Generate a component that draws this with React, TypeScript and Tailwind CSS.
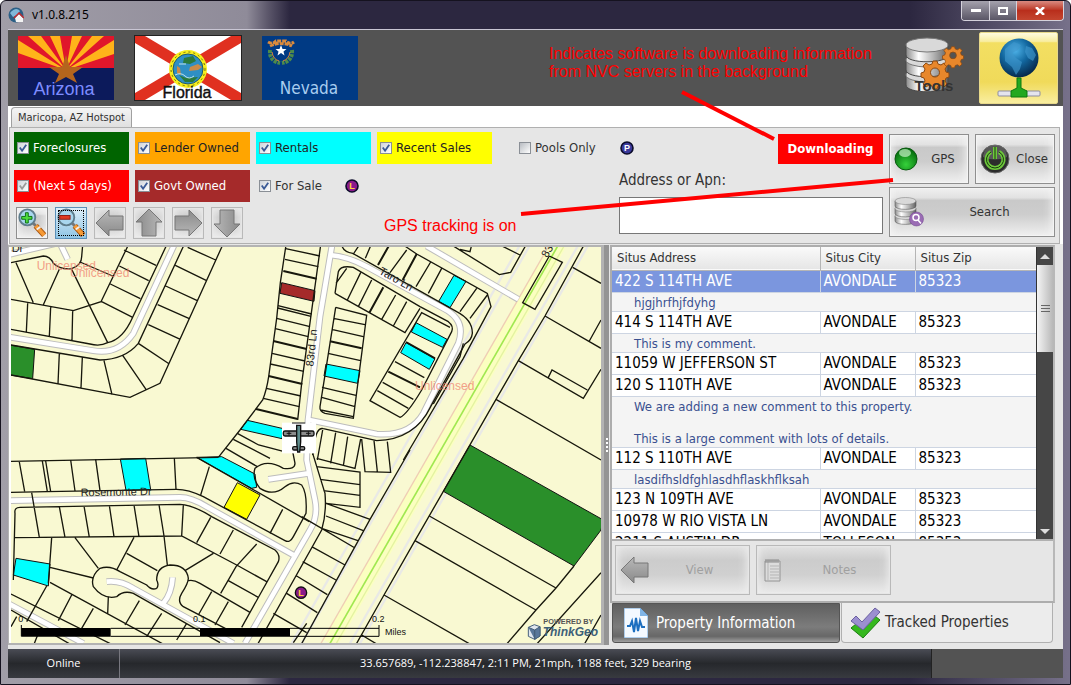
import React, { useState } from "react"

interface IFilter {
    id: string
    label: string
    className: string
    checked: boolean
    disabled?: boolean
    marker?: "L" | "P"
}

interface IProperty {
    address: string
    city: string
    zip: string
    comment?: string[]
}

const TAHOMA = "font-['DejaVu_Sans_Condensed','DejaVu_Sans',sans-serif]"
const ARIAL = "font-['Liberation_Sans',Arial,sans-serif]"

const glossy =
    "border border-[#8f8f8f] bg-[linear-gradient(180deg,#f0f0f0_0%,#e2e2e2_20%,#c9c9c9_26%,#cdcdcd_55%,#f0f0f0_100%)] shadow-[inset_0_0_0_1px_#f4f4f4,inset_-8px_0_10px_-6px_#f4f4f4,inset_8px_0_10px_-6px_#f4f4f4]"
const flat =
    "border border-[#b9b9b9] bg-[linear-gradient(180deg,#e2e2e2_0%,#cccccc_30%,#d0d0d0_60%,#ebebeb_100%)] shadow-[inset_0_0_0_1px_#e6e6e6,inset_-8px_0_10px_-6px_#eeeeee,inset_8px_0_10px_-6px_#eeeeee]"

const filters: IFilter[] = [
    { id: "foreclosures", label: "Foreclosures", className: "bg-[#006400] text-white", checked: true },
    { id: "lender", label: "Lender Owned", className: "bg-[#ffa500] text-[#222]", checked: true },
    { id: "rentals", label: "Rentals", className: "bg-[#00ffff] text-[#222]", checked: true },
    { id: "recent", label: "Recent Sales", className: "bg-[#ffff00] text-[#222]", checked: true },
    { id: "next", label: "(Next 5 days)", className: "bg-[#ff0000] text-white", checked: true, disabled: true },
    { id: "govt", label: "Govt Owned", className: "bg-[#a52a2a] text-white", checked: true },
    { id: "sale", label: "For Sale", className: "text-[#333]", checked: true, marker: "L" },
]

const properties: IProperty[] = [
    { address: "422 S 114TH AVE", city: "AVONDALE", zip: "85323", comment: ["hjgjhrfhjfdyhg"] },
    { address: "414 S 114TH AVE", city: "AVONDALE", zip: "85323", comment: ["This is my comment."] },
    { address: "11059 W JEFFERSON ST", city: "AVONDALE", zip: "85323" },
    {
        address: "120 S 110TH AVE",
        city: "AVONDALE",
        zip: "85323",
        comment: ["We are adding a new comment to this property.", "", "This is a large comment with lots of details."],
    },
    { address: "112 S 110TH AVE", city: "AVONDALE", zip: "85323", comment: ["lasdifhsldfghlasdhflaskhflksah"] },
    { address: "123 N 109TH AVE", city: "AVONDALE", zip: "85323" },
    { address: "10978 W RIO VISTA LN", city: "AVONDALE", zip: "85323" },
    { address: "2211 S AUSTIN DR", city: "TOLLESON", zip: "85353" },
]

function Marker({ letter }: { letter: "L" | "P" }) {
    const isL = letter === "L"
    return (
        <svg viewBox="0 0 14 14" className="w-[14px] h-[14px] shrink-0" aria-hidden="true">
            <circle cx="7" cy="7" r="6" fill={isL ? "#8b1a8b" : "#3a3a9c"} stroke="#0b0b2a" strokeWidth="1.6" />
            <text
                x="7"
                y="10"
                fontSize="9"
                fontWeight="bold"
                textAnchor="middle"
                fontFamily="Liberation Sans, sans-serif"
                fill={isL ? "#ffd23c" : "#ffffff"}
            >
                {letter}
            </text>
        </svg>
    )
}

function FilterBox({ filter }: { filter: IFilter }) {
    const [checked, setChecked] = useState(filter.checked)
    return (
        <div className={`flex items-center h-8 px-[3px] text-[13px] ${filter.className}`}>
            <span className="relative flex w-3 h-3 shrink-0">
                <input
                    id={filter.id}
                    type="checkbox"
                    checked={checked}
                    disabled={filter.disabled}
                    onChange={(e) => setChecked(e.target.checked)}
                    className="peer appearance-none w-3 h-3 border border-[#8a8f96] bg-[linear-gradient(135deg,#cfd4da,#ffffff)]"
                />
                <svg
                    viewBox="0 0 13 13"
                    className="absolute inset-0 hidden peer-checked:block pointer-events-none"
                    fill="none"
                    stroke={filter.disabled ? "#9a9a9a" : "#3a5a96"}
                    strokeWidth="2"
                >
                    <path d="M3 6l2.5 3.5L10 3" />
                </svg>
            </span>
            <label htmlFor={filter.id} className="pl-1 whitespace-nowrap">
                {filter.label}
            </label>
            {filter.marker && (
                <span className="ml-[23px]">
                    <Marker letter={filter.marker} />
                </span>
            )}
        </div>
    )
}

function ArizonaFlag() {
    return (
        <svg viewBox="0 0 96 64" className="w-24 h-16">
            <rect width="96" height="64" fill="#0c1a5b" />
            <rect width="96" height="32" fill="#e0162b" />
            <path
                d="M48 34L0 4v13zM48 34L10 0h13zM48 34L32 0h10zM48 34L54 0h10zM48 34L74 0h12zM48 34L96 4v14z"
                fill="#ffb31a"
            />
            <path d="M0 32h96v2H0z" fill="#0c1a5b" />
            <path d="M48 19l4 12h13l-10 7 4 9-11-6-11 6 4-9-10-7h13z" fill="#b5651d" />
            <text x="46" y="59" textAnchor="middle" fontSize="18" fontFamily="Liberation Sans, sans-serif" fill="#7d8cff">
                Arizona
            </text>
        </svg>
    )
}

function FloridaFlag() {
    return (
        <svg viewBox="0 0 108 66" className="w-[108px] h-[66px]">
            <rect x=".5" y=".5" width="107" height="65" fill="#fff" stroke="#222" />
            <path d="M1 1h10l96 57v7H97L1 8z M107 1H97L1 58v7h10l96-57z" fill="#e03020" />
            <circle cx="54" cy="34" r="19" fill="#f7ee1d" />
            <circle cx="54" cy="34" r="17" fill="none" stroke="#6b6a10" strokeWidth="1" strokeDasharray="2 3" />
            <circle cx="54" cy="34" r="15" fill="#2f8fc4" stroke="#205a66" />
            <path d="M50 23l9-2 3 5-6 3-7-1z M45 40l7 3 12-1-5 5h-8z" fill="#2b7a3c" />
            <path d="M56 32l8-3 4 3-4 3-9 1z M43 31l3 2 1 7-4-2z" fill="#c98b4a" />
            <path d="M41 40q6-3 10 1t9 0M45 29h7" stroke="#bfe4ee" fill="none" />
            <text x="53" y="63" textAnchor="middle" fontSize="16" fontFamily="Liberation Sans, sans-serif" fill="#111" stroke="#111" strokeWidth=".4">
                Florida
            </text>
        </svg>
    )
}

function NevadaFlag() {
    return (
        <svg viewBox="0 0 96 64" className="w-24 h-16">
            <rect width="96" height="64" fill="#003a84" />
            <path d="M6 6q5 3 8-1h10q4 4 8 1M8 10q11-5 22 0" stroke="#d98a3d" strokeWidth="3" fill="none" strokeDasharray="4 1" />
            <path d="M8 14q-1 11 10 13M30 14q1 11-10 13" stroke="#4d8b4a" strokeWidth="4" fill="none" strokeDasharray="3 1" />
            <path d="M10 16q1 7 7 9M28 16q-1 7-7 9" stroke="#d9803d" strokeWidth="1" fill="none" />
            <path d="M19 9l1.500 4h4l-3 2.500 1 4-3.500-2.500-3.500 2.500 1-4-3-2.500h4z" fill="#fff" />
            <text x="47" y="58" textAnchor="middle" fontSize="17" fontFamily="DejaVu Sans Condensed, DejaVu Sans, sans-serif" fill="#a9cdf0">
                Nevada
            </text>
        </svg>
    )
}

const GEAR = "M-2-11h4l1 3 3 1 3-2 3 3-2 3 1 3 3 1v4l-3 1-1 3 2 3-3 3-3-2-3 1-1 3h-4l-1-3-3-1-3 2-3-3 2-3-1-3-3-1v-4l3-1 1-3-2-3 3-3 3 2 3-1zM0-4a4.500 4.500 0 100 9 4.500 4.500 0 000-9z"

function Disks() {
    return (
        <>
            <defs>
                <linearGradient id="metal">
                    <stop offset="0" stopColor="#8a8a8a" />
                    <stop offset=".3" stopColor="#ffffff" />
                    <stop offset=".65" stopColor="#b5b5b5" />
                    <stop offset="1" stopColor="#626262" />
                </linearGradient>
            </defs>
            {[36, 21, 6].map((y) => (
                <g key={y}>
                    <path d={`M2 ${y + 4}v10c0 9 42 9 42 0v-10z`} fill="url(#metal)" stroke="#4a4a4a" />
                    <ellipse cx="23" cy={y + 4} rx="21" ry="7" fill="#d9d9d9" stroke="#777" />
                </g>
            ))}
        </>
    )
}

function ToolsIcon() {
    return (
        <svg viewBox="0 0 62 64" className="w-[62px] h-16">
            <Disks />
            <path d={GEAR} transform="translate(31 37)" fill="#e8872b" stroke="#8f4a10" fillRule="evenodd" />
            <path d={GEAR} transform="translate(49 20) scale(.75)" fill="#e8872b" stroke="#8f4a10" fillRule="evenodd" />
            <text x="30" y="56" textAnchor="middle" fontSize="15" fontFamily="Liberation Sans, sans-serif" fontWeight="bold" fill="#333">
                Tools
            </text>
        </svg>
    )
}

function GlobeIcon() {
    return (
        <svg viewBox="0 0 48 64" className="w-12 h-16">
            <defs>
                <radialGradient id="sea" cx=".4" cy=".3" r=".7">
                    <stop offset="0" stopColor="#4fb4ea" />
                    <stop offset=".5" stopColor="#12679f" />
                    <stop offset="1" stopColor="#062a4d" />
                </radialGradient>
            </defs>
            <circle cx="24" cy="22" r="19.500" fill="url(#sea)" />
            <path d="M10 13l9-7 7 3-3 5-6 3 4 5 6 4-2 7-4 6-4-8-7-6zM31 10l6 2 4 7-3 6-5-3-3-6z" fill="#3f96cc" opacity=".65" />
            <rect x="3" y="55" width="42" height="5" rx="1" fill="#e4e4ee" stroke="#8d8da0" />
            <path d="M22 42h4v10l6 3v6H16v-6l6-3z" fill="#23a820" stroke="#0d7a0e" />
        </svg>
    )
}

function Magnifier({ minus }: { minus?: boolean }) {
    return (
        <svg viewBox="0 0 32 32" className="w-[30px] h-[30px]">
            <path d="M17 16l4 4" stroke="#777" strokeWidth="3" />
            <path d="M20 19l9 10" stroke="#a85510" strokeWidth="6" />
            <path d="M20 19l9 10" stroke="#f59a36" strokeWidth="4" />
            <path d="M21 23l4-3" stroke="#eee" strokeWidth="2" />
            <circle cx="11" cy="10" r="8.500" fill="#a9d6ee" stroke="#5f7d8c" strokeWidth="2" />
            {minus ? (
                <rect x="4" y="8" width="11" height="4" fill="#e03a20" stroke="#8f1a10" />
            ) : (
                <path d="M9 5h3v4h4v3h-4v4H9v-4H5V9h4z" fill="#4ddc3d" stroke="#0b6b12" />
            )}
        </svg>
    )
}

function ArrowIcon({ className }: { className?: string }) {
    return (
        <svg viewBox="0 0 30 30" className={`w-[30px] h-[30px] ${className ?? ""}`}>
            <defs>
                <linearGradient id="arrow" x2="0" y2="1">
                    <stop offset="0" stopColor="#b8b8b8" />
                    <stop offset="1" stopColor="#8a8a8a" />
                </linearGradient>
            </defs>
            <path d="M1 15L14 2v6h14v14H14v6z" fill="url(#arrow)" stroke="#777" />
        </svg>
    )
}

/* Three map units per screen pixel. Each quadrant has its own origin. */
function ParcelMap() {
    return (
        <svg
            viewBox="33 21 1770 1188"
            preserveAspectRatio="xMinYMin slice"
            className="block w-full h-full bg-[#f9f9d2]"
            fontFamily="Liberation Sans, sans-serif"
            fontSize="33"
            role="img"
            aria-label="Parcel map"
        >
            {/* highway */}
            <g fill="none">
                <path d="M1675 15L990 1210" stroke="#fbffc0" strokeWidth="46" />
                <path d="M1560 15L875 1210M1590 15L905 1210M1735 15L1050 1210M1765 15L1080 1210" stroke="#e9e9e6" strokeWidth="7" />
                <path d="M1648 15L963 1210" stroke="#efcdb4" strokeWidth="4" />
                <path d="M1694 15L1009 1210" stroke="#e3f3a0" strokeWidth="4" />
                <path d="M1675 15L990 1210" stroke="#a0e850" strokeWidth="5" />
            </g>

            {/* streets: grey casing first, white fill over it */}
            {[
                { stroke: "#bdbdbd", width: 20 },
                { stroke: "#ffffff", width: 14 },
            ].map((s) => (
                <g key={s.width} fill="none" stroke={s.stroke} strokeWidth={s.width}>
                    <path d="M20 290L280 332Q355 345 400 280L525 10M20 45L170 10M180 10L203 58" />
                    <path d="M997 10L960 230L924 540L920 660L945 780Q955 830 930 870L735 1210" />
                    <path d="M990 45Q1045 50 1100 80L1330 205Q1400 240 1375 310L1270 520Q1230 590 1130 582L928 540" />
                    <path d="M1280 18L1555 178" />
                    <path d="M20 782L540 772Q575 772 620 800L880 945" />
                    <path d="M320 1025Q360 1020 400 1045L700 1210M518 1012Q515 1060 490 1090M805 718L925 700M20 1088L250 1210" />
                </g>
            ))}

            {/* flagged parcels */}
            <g stroke="#111" strokeWidth="3">
                <path d="M30 315L104 328L98 416L30 405z" fill="#2a8f2a" />
                <path d="M845 128L945 152L942 184L840 160z" fill="#a52a2a" />
                <g fill="#00ffff">
                    <path d="M742 541L850 566L846 596L722 568z" />
                    <path d="M1362 106L1398 124L1350 203L1316 184z" />
                    <path d="M1248 248L1341 298L1328 322L1234 276z" />
                    <path d="M1218 308L1305 356L1288 388L1202 338z" />
                    <path d="M978 372L1080 392L1073 430L972 408z" />
                    <path d="M361 657L437 655L452 749L378 751z" />
                    <path d="M590 652L665 650L765 702L770 742L755 745z" />
                    <path d="M48 955L150 972L145 1038L40 1005z" />
                </g>
                <path d="M712 728L780 765L740 838L672 802z" fill="#ffff00" />
                <path d="M1410 615L1810 840L1803 870L1722 978L1330 754z" fill="#2a8f2a" />
            </g>

            {/* parcel lines */}
            <g fill="none" stroke="#17170c" strokeWidth="4">
                <path d="M33 68L130 48Q150 48 160 70Q180 90 215 86Q245 75 245 50L248 15M48 68L100 188M33 178L220 212L303 185L385 15M178 88L130 194M215 88L323 308M240 66L338 108M372 30L468 76M358 78L446 122M331 132L421 176M305 185L398 232M500 15L398 232Q368 300 323 308Q300 320 270 312L33 268M83 190L79 276M152 200L148 290M218 212L216 300" />
                <path d="M552 15L415 310Q375 358 300 360L33 315M563 22L647 60M526 76L620 122M497 138L592 182M473 194L568 236M445 254L541 298M415 310L508 372M368 346L438 448M312 362L336 464M668 15L480 430L390 472L33 405M178 340L174 432M247 352L243 444" />
                <path d="M858 15L841 128L830 235L806 410Q800 450 788 480L720 570L655 652M962 15L905 430L893 540" />
                <path d="M857 26L960 48M855 58L955 80M834 197L935 222M833 204L933 229M830 235L930 260M826 266L925 290M816 340L915 363M811 372L912 394M799 445L903 468M790 475L898 500M712 580L776 615L850 634M700 598L810 655M678 625L772 680" />
                <path d="M850 93L950 116M820 303L920 327M806 408L907 432M768 507L893 537" strokeWidth="6" />
                <g transform="translate(900 0)">
                    <path d="M125 15Q130 36 158 40L470 215Q518 240 517 280Q515 300 495 312L392 500Q345 598 230 602L70 566Q48 560 42 620L38 645" />
                    <path d="M310 15L350 42L562 160L573 200L490 355L310 660M178 15L160 42M213 15L196 55M320 30L270 98M392 66L348 140M425 85L385 160M530 145L480 215M562 165L510 235M490 310L480 350L400 492" />
                    <path d="M268 15L234 75M350 42L308 120M250 142L208 218M318 306L405 355M265 395L360 442M90 304L185 325" strokeWidth="6" />
                    <path d="M105 160L115 95Q122 75 160 82L360 200L445 245Q462 258 455 275L365 450Q320 525 300 532L210 482L365 218L450 262M105 160L208 218L315 278L360 205M140 85L108 130M182 98L142 180M215 120L175 200M287 165L245 238M320 185L280 258M285 365L373 413M248 427L340 478M232 452L325 505" />
                    <path d="M107 202L60 500Q58 515 75 520L160 535L200 226L107 202M100 235L195 254M95 268L190 290M84 340L182 362M66 442L168 466M65 472L165 500M62 510L160 530" />
                    <path d="M68 570L52 660M107 578L92 670M143 590L130 678M182 597L165 685L50 655M185 597L195 695L272 697L262 605M222 602L232 695" />
                    <path d="M455 15L598 104L632 97L678 15M600 15L660 45M480 28L510 35L515 15M852 15L735 228L655 362L588 478L430 754L345 902L252 1065L170 1210" />
                    <path d="M818 82L903 130M748 48L787 67L705 208L668 188L748 48M735 228L903 325M903 240L868 303M655 362L850 475L903 388M745 412L756 390L862 450M588 478L903 660" />
                </g>
                <g transform="translate(0 630)">
                    <path d="M33 34L655 22M33 127L140 125L530 118Q565 118 610 140L855 272Q870 280 880 260L918 190Q922 130 905 105Q880 90 855 110Q820 140 780 115Q755 85 765 55Q800 25 850 55Q885 60 885 40L878 5" />
                    <path d="M58 36L74 125M127 33L142 125M137 33L152 125M212 30L225 123M287 28L300 122M523 24L528 118M628 50L602 135M590 22L928 215M848 178L810 250" />
                    <path d="M40 390L45 190Q42 172 60 172L540 163Q580 165 635 200L825 300Q842 315 835 335L725 532M45 263L545 258L710 345L800 395M95 128L118 262M178 170L195 262M252 168L268 262M328 166L342 260M402 165L417 260M477 164L492 258L502 345M550 165L545 258M632 202L590 278M700 240L660 312M770 282L708 350L662 430M685 392L775 442M640 310L555 362M225 263L295 355M402 262L350 360M380 310L472 362M155 263L145 400M150 352L280 384" />
                    <path d="M470 415Q455 422 440 405L360 365Q330 345 300 355Q270 380 280 410Q310 450 350 440Q370 420 400 430L660 578M470 415Q478 405 470 390Q470 350 510 345Q560 345 565 385Q565 400 545 430Q530 455 550 470L700 548M565 392Q580 388 600 400L750 487" />
                    <path d="M325 440L323 492M150 397L500 588M140 408L80 515M33 432L345 588M215 435L175 512M280 475L245 535M418 452L375 525M485 490L440 560M635 425L595 495M685 455L645 525M33 480L220 588M100 588L115 550M50 500L33 530M560 520L530 570" />
                </g>
                <g transform="translate(900 630)">
                    <path d="M38 10L75 130Q80 190 65 240L-130 588M330 0L210 208L165 290L0 590M50 50L180 66L180 172L78 160M60 88L180 104M70 122L180 136M78 160L210 208M78 198L190 242M65 235L174 272M5 200L165 294M35 290L135 345M8 335L108 390M-10 378L82 434M-40 430L52 488M-80 490L20 548M-20 578L20 520" />
                    <path d="M388 198L768 414M345 272L708 480M252 435L520 588M822 348L768 414L708 480L615 588M903 368L705 588M903 495L850 588M185 555L240 588" />
                </g>
            </g>

            <g fill="#222">
                <text x="35" y="36">Dr</text>
                <text transform="translate(940 380) rotate(-84)">83rd Ln</text>
                <text transform="translate(1135 100) rotate(29)">Taro Ln</text>
                <text transform="translate(1642 55) rotate(-60)">83</text>
                <text transform="translate(242 769) rotate(-1)">Rosemonte Dr</text>
            </g>
            <g fill="#f0836f" opacity=".75">
                <text x="110" y="90" fontSize="36">Unlicensed</text>
                <text x="210" y="111" fontSize="36">Unlicensed</text>
                <text x="1245" y="450" fontSize="36">Unlicensed</text>
            </g>

            {/* current position */}
            <g transform="translate(846 548)">
                <rect width="102" height="92" fill="#fff" />
                <g fill="#8c8c8c" stroke="#111" strokeWidth="4">
                    <rect x="4" y="25" width="92" height="15" rx="5" />
                    <rect x="32" y="72" width="36" height="10" rx="4" />
                    <path d="M44 8h12v50l-3 30h-6l-3-30z" fill="#5f8c8c" />
                </g>
                <path d="M30 1h40M14 32h14M21 26v13M72 32h14M79 26v13" stroke="#111" strokeWidth="3" />
            </g>

            <g transform="translate(903 1058)">
                <circle r="17" fill="#8b1a8b" stroke="#111" strokeWidth="4" />
                <text y="10" textAnchor="middle" fontSize="27" fontWeight="bold" fill="#ffd23c">
                    L
                </text>
            </g>

            {/* scale bar */}
            <g transform="translate(0 630)">
                <path d="M64 525v34M1137 525v34M332 535h268M332 559h268M870 535h267M870 559h267" stroke="#000" strokeWidth="3" />
                <path d="M64 534h268v26H64zM600 534h270v26H600z" />
                <g fontSize="27" fill="#111">
                    <text x="62" y="515" textAnchor="middle">0</text>
                    <text x="598" y="515" textAnchor="middle">0.1</text>
                    <text x="1135" y="515" textAnchor="middle">0.2</text>
                    <text x="1155" y="556">Miles</text>
                </g>
            </g>

            <g transform="translate(1580 1150)">
                <path d="M5 12l18-8 17 6v28l-16 10-19-9z" fill="#dfe6ee" stroke="#47617c" strokeWidth="3" />
                <path d="M5 12l19 8v28M24 20l16-10v28l-16 10z" fill="#58779a" stroke="#47617c" strokeWidth="3" />
                <text x="50" y="1" fontSize="22" fontWeight="bold" fill="#555">
                    POWERED BY
                </text>
                <text x="48" y="38" fontSize="36" fontWeight="bold" fontStyle="italic" fill="#3c6078">
                    ThinkGeo
                </text>
            </g>
        </svg>
    )
}

function PropertyTable() {
    return (
        <div className="flex flex-1 min-h-0 bg-white">
            <div className="flex-1 min-w-0 overflow-hidden">
                <table className="table-fixed w-full border-collapse text-left">
                    <colgroup>
                        <col />
                        <col className="w-[95px]" />
                        <col className="w-[121px]" />
                    </colgroup>
                    <thead>
                        <tr className="h-[23px] bg-linear-to-b from-[#fafafa] to-[#e6e6e6] border-b border-[#b5b5b5] text-[13px] leading-[22px] text-[#333]">
                            <th className="p-0 pl-[5px] font-normal border-r border-[#b5b5b5]">Situs Address</th>
                            <th className="p-0 pl-[5px] font-normal border-r border-[#b5b5b5]">Situs City</th>
                            <th className="p-0 pl-[5px] font-normal">Situs Zip</th>
                        </tr>
                    </thead>
                    <tbody>
                        {properties.map((p, i) => (
                            <React.Fragment key={p.address}>
                                <tr
                                    className={`h-[22px] text-[15px] leading-[21px] whitespace-nowrap border-b border-[#cdd5e2] ${
                                        i === 0 ? "bg-[#7b96de] text-white" : "bg-white text-black"
                                    }`}
                                >
                                    <td className="p-0 pl-[3px] border-r border-[#cdd5e2]">{p.address}</td>
                                    <td className="p-0 pl-[3px] border-r border-[#cdd5e2]">{p.city}</td>
                                    <td className="p-0 pl-[3px]">{p.zip}</td>
                                </tr>
                                {p.comment && (
                                    <tr className="bg-[#f4f4f4] border-b border-[#cdd5e2] text-[13px] text-[#3a5090]">
                                        <td colSpan={3} className="p-0 pl-[22px] pt-[2px]">
                                            {p.comment.map((line, j) => (
                                                <p key={j} className="h-4 leading-4">
                                                    {line}
                                                </p>
                                            ))}
                                        </td>
                                    </tr>
                                )}
                            </React.Fragment>
                        ))}
                    </tbody>
                </table>
            </div>
            <div className="flex flex-col w-[17px] bg-[#464646] border-l border-[#333]">
                <button aria-label="Scroll up" className="flex items-center justify-center h-[18px]">
                    <svg viewBox="0 0 10 5" className="w-[10px] h-[5px]">
                        <path d="M0 5l5-5 5 5z" fill="#ddd" />
                    </svg>
                </button>
                <div className="flex flex-col items-center justify-center gap-[2px] h-[87px] bg-linear-to-r from-[#f4f4f4] to-[#b8b8b8]">
                    <span className="w-[9px] h-px bg-[#666]" />
                    <span className="w-[9px] h-px bg-[#666]" />
                    <span className="w-[9px] h-px bg-[#666]" />
                </div>
                <button aria-label="Scroll down" className="flex items-center justify-center h-4 mt-auto">
                    <svg viewBox="0 0 10 5" className="w-[10px] h-[5px]">
                        <path d="M0 0l5 5 5-5z" fill="#ddd" />
                    </svg>
                </button>
            </div>
        </div>
    )
}

function TitleBar() {
    return (
        <div className="flex items-start justify-between h-7 pl-[7px] pr-[6px]">
            <div className="flex items-center gap-2 h-7">
                <svg viewBox="0 0 16 16" className="w-4 h-4">
                    <circle cx="8" cy="8" r="7.500" fill="#2b5f86" />
                    <path d="M2 6q6-7 10-2l-3 4-4 2z" fill="#7fb7d9" />
                    <path d="M7 11l4-4 4 4v4H8z" fill="#f4f4f4" />
                    <path d="M6 11l5-5 5 5" stroke="#c0282d" strokeWidth="1.500" fill="none" />
                </svg>
                <h1 className="text-[12px] text-black font-['Noto_Sans','Open_Sans',sans-serif]">v1.0.8.215</h1>
            </div>
            <div className="flex h-5 border border-t-0 border-[#d5d2dc] rounded-b-[4px] overflow-hidden">
                <button aria-label="Minimize" className="flex items-center justify-center w-[28px] border-r border-[#d5d2dc] bg-linear-to-b from-[#a5a2ad] to-[#5a5666]">
                    <span className="w-[10px] h-[3px] bg-white" />
                </button>
                <button aria-label="Maximize" className="flex items-center justify-center w-[27px] border-r border-[#d5d2dc] bg-linear-to-b from-[#a5a2ad] to-[#5a5666]">
                    <span className="w-[10px] h-2 border-2 border-white" />
                </button>
                <button aria-label="Close window" className="flex items-center justify-center w-[46px] bg-linear-to-b from-[#d98a80] via-[#b92e1c] to-[#c4452f]">
                    <svg viewBox="0 0 10 8" className="w-[10px] h-2" stroke="#fff" strokeWidth="2.500">
                        <path d="M1 0l8 8M9 0L1 8" />
                    </svg>
                </button>
            </div>
        </div>
    )
}

function Toolbar() {
    const [pools, setPools] = useState(false)
    const [address, setAddress] = useState("")
    return (
        <div className="flex h-[117px] ml-px mr-[3px] pl-1 pr-1 border border-[#b0b0b0] bg-[#e6e6e6]">
            <div className="pt-1">
                <div className="grid grid-cols-[repeat(4,115px)] gap-[6px]">
                    {filters.map((f) => (
                        <FilterBox key={f.id} filter={f} />
                    ))}
                </div>
                <div className="flex gap-[7px] pt-[5px] pl-[2px]">
                    <button aria-label="Zoom in" className={`w-8 h-8 ${glossy}`}>
                        <Magnifier />
                    </button>
                    <button aria-label="Zoom out" className="w-8 h-8 border border-[#5a8fb8] bg-linear-to-b from-[#dff0fa] to-[#8fc4e4] outline-1 outline-dotted outline-offset-[-4px] outline-black">
                        <Magnifier minus />
                    </button>
                    <button aria-label="Pan left" className={`w-8 h-8 ${flat}`}>
                        <ArrowIcon />
                    </button>
                    <button aria-label="Pan up" className={`w-8 h-8 ${flat}`}>
                        <ArrowIcon className="rotate-90" />
                    </button>
                    <button aria-label="Pan right" className={`w-8 h-8 ${flat}`}>
                        <ArrowIcon className="rotate-180" />
                    </button>
                    <button aria-label="Pan down" className={`w-8 h-8 ${flat}`}>
                        <ArrowIcon className="-rotate-90" />
                    </button>
                </div>
            </div>
            <div className="flex flex-col flex-1 pl-[27px] pr-[6px]">
                <div className="flex h-10 items-start">
                    <div className="flex items-center h-8 mt-1 text-[13px] text-[#333]">
                        <input
                            id="pools"
                            type="checkbox"
                            checked={pools}
                            onChange={(e) => setPools(e.target.checked)}
                            className="appearance-none w-3 h-3 border border-[#8a8f96] bg-[linear-gradient(135deg,#b8bcc2,#ffffff)] checked:bg-[#3a5a96]"
                        />
                        <label htmlFor="pools" className="w-[89px] pl-1 whitespace-nowrap">
                            Pools Only
                        </label>
                        <Marker letter="P" />
                    </div>
                    <p className="ml-auto mt-[6px] w-[105px] h-[30px] bg-[#ff0000] text-white text-center text-[13px] leading-[30px] font-bold">
                        Downloading
                    </p>
                </div>
                <div className="flex flex-col self-end w-[264px]">
                    <label htmlFor="address" className="pt-[2px] h-[29px] text-[15px] leading-5 text-[#333]">
                        Address or Apn:
                    </label>
                    <input
                        id="address"
                        value={address}
                        onChange={(e) => setAddress(e.target.value)}
                        className="w-full h-[37px] px-2 border border-[#777] bg-white outline-none"
                    />
                </div>
            </div>
            <div className="grid grid-cols-[80px_80px] gap-x-[6px] gap-y-[3px] w-[166px] shrink-0 content-start pt-[6px] text-[13px] text-[#333]">
                <button className={`flex items-center h-[50px] pl-1 ${glossy}`}>
                    <svg viewBox="0 0 24 24" className="w-6 h-6">
                        <defs>
                            <radialGradient id="led" cx=".5" cy=".75" r=".7">
                                <stop offset="0" stopColor="#35d13a" />
                                <stop offset="1" stopColor="#036a0c" />
                            </radialGradient>
                        </defs>
                        <circle cx="12" cy="12" r="11" fill="url(#led)" stroke="#0a5a10" />
                        <ellipse cx="11" cy="6" rx="6" ry="4" fill="#c7f2c6" opacity=".7" />
                    </svg>
                    <span className="flex-1">GPS</span>
                </button>
                <button className={`flex items-center h-[50px] pl-1 ${glossy}`}>
                    <svg viewBox="0 0 30 30" className="w-[30px] h-[30px] shrink-0">
                        <circle cx="15" cy="15" r="14" fill="#2c2c2c" stroke="#666" />
                        <path d="M3 13a12 12 0 0124 0q-12 5-24 0z" fill="#777" opacity=".6" />
                        <path d="M11 8a8.500 8.500 0 108 0M15 3v12" fill="none" stroke="#6ec83c" strokeWidth="4" />
                        <path d="M11 8a8.500 8.500 0 108 0M15 3v12" fill="none" stroke="#163a0c" strokeWidth="1" />
                    </svg>
                    <span className="flex-1">Close</span>
                </button>
                <button className={`flex items-center col-span-2 h-[50px] pl-1 ${glossy}`}>
                    <svg viewBox="0 0 62 64" className="w-[31px] h-8">
                        <Disks />
                        <circle cx="45" cy="46" r="14" fill="#9a6cb4" stroke="#6b3f88" />
                        <circle cx="44" cy="43" r="6" fill="none" stroke="#fff" strokeWidth="3" />
                        <path d="M48 48l6 7" stroke="#fff" strokeWidth="3" />
                    </svg>
                    <span className="flex-1">Search</span>
                </button>
            </div>
        </div>
    )
}

function SidePanel() {
    return (
        <div className="flex flex-col w-[454px] shrink-0 pl-px pr-2 pb-[2px] bg-[#e6e6e6]">
            <div className="flex flex-col flex-1 min-h-0 border-2 border-[#adadad] border-r-[#b8b8b8]">
                <PropertyTable />
                <div className="flex gap-[6px] h-[62px] pt-1 pl-[3px] border-t-2 border-[#b0b0b0] bg-[#e6e6e6] text-[13px] text-[#a0a0a0]">
                    <button disabled className={`flex items-center w-[135px] h-[50px] pl-1 ${flat}`}>
                        <ArrowIcon />
                        <span className="flex-1">View</span>
                    </button>
                    <button disabled className={`flex items-center w-[135px] h-[50px] pl-[7px] ${flat}`}>
                        <svg viewBox="0 0 17 24" className="w-[17px] h-6">
                            <path d="M1 3h15v20H1z" fill="#dcdcdc" stroke="#949494" />
                            <path d="M4 3v20M6 8h9M6 11h9M6 14h9M6 17h9M6 20h9" stroke="#b5b5b5" />
                            <path d="M2 1v4M4 1v4M6 1v4M8 1v4M10 1v4M12 1v4M14 1v4" stroke="#8a8a8a" />
                        </svg>
                        <span className="flex-1 pl-2">Notes</span>
                    </button>
                </div>
            </div>
            <div className="flex h-10 pl-[2px] gap-px text-[15px]">
                <button className="flex items-center gap-2 w-[228px] h-10 pl-[11px] rounded-b-[3px] border border-[#555] bg-[linear-gradient(180deg,#5f5f5f_0%,#7c7c7c_60%,#676767_85%,#a0a0a0_100%)] text-white">
                    <svg viewBox="0 0 24 30" className="w-6 h-[30px]">
                        <path d="M0 0h16l8 8v22H0z" fill="#f4f9ff" stroke="#6aa2d8" />
                        <path d="M16 0l8 8h-8z" fill="#7fb4e6" />
                        <path d="M3 18h3l2-5 2 11 2-14 2 13 2-10 2 6h3" fill="none" stroke="#1d6fc0" strokeWidth="2" />
                    </svg>
                    Property Information
                </button>
                <button className="flex items-center gap-1 flex-1 h-10 pl-[7px] mr-[2px] rounded-b-[4px] border border-t-0 border-[#b0b0b0] bg-[#ececec] text-[#333]">
                    <svg viewBox="0 0 32 32" className="w-8 h-8 shrink-0">
                        <path d="M2 21l5-4 6 5L26 9l5 4-17 18z" fill="#35b81e" stroke="#1b7d10" />
                        <path d="M2 14l5-5 6 6L26 1l5 4-17 18z" fill="#9b8fd0" stroke="#6a5fa0" />
                    </svg>
                    Tracked Properties
                </button>
            </div>
        </div>
    )
}

export default function App() {
    return (
        <div
            className={`relative flex flex-col h-screen min-h-[600px] overflow-hidden rounded-t-[6px] border border-[#15121f] bg-[linear-gradient(90deg,#a19ea8_0%,#8f8b99_23%,#5b566a_25%,#2c2740_27%,#2c2740_85%,#77718a_100%)] ${TAHOMA}`}
        >
            <TitleBar />
            <div className="flex flex-col flex-1 min-h-0 mx-[7px] mb-[6px] border-t border-[#c9c6d4] bg-white">
                <header className="flex items-start h-[76px] pt-[5px] pl-[10px] pr-[5px] gap-5 bg-[#535353]">
                    <button aria-label="Arizona" className="pt-px">
                        <ArizonaFlag />
                    </button>
                    <button aria-label="Florida">
                        <FloridaFlag />
                    </button>
                    <button aria-label="Nevada" className="pt-px">
                        <NevadaFlag />
                    </button>
                    <button aria-label="Tools" className="ml-auto">
                        <ToolsIcon />
                    </button>
                    <button
                        aria-label="Network"
                        className="flex items-center justify-center w-[79px] h-[72px] -mt-[3px] -ml-[7px] rounded-[2px] border border-[#e8d98a] bg-[linear-gradient(180deg,#fffbe0_0%,#f8eda0_12%,#f3df62_14%,#f0da5a_70%,#f9eea0_100%)]"
                    >
                        <GlobeIcon />
                    </button>
                </header>
                <div className="flex items-end h-[21px] pl-[3px]">
                    <button className="h-5 w-[121px] rounded-t-[4px] border border-b-0 border-[#a0a0a0] bg-linear-to-b from-[#f4f4f4] to-[#e0e0e0] text-[11px] leading-[20px] text-[#333] whitespace-nowrap">
                        Maricopa, AZ Hotspot
                    </button>
                </div>
                <Toolbar />
                <main className="flex flex-1 min-h-0 pt-px pb-1 bg-[#e6e6e6]">
                    <div className="flex-1 min-w-0 pl-[2px] border-2 border-r-[3px] border-l border-[#b3b3b3] bg-white">
                        <ParcelMap />
                    </div>
                    <div className="flex flex-col items-center justify-center gap-[2px] w-[5px] bg-[#949494]">
                        {[0, 1, 2, 3].map((n) => (
                            <span key={n} className="w-[2px] h-[2px] bg-white" />
                        ))}
                    </div>
                    <SidePanel />
                </main>
                <footer className="flex h-[29px] bg-[#535353] text-white text-[11px] leading-7 text-center font-['Open_Sans','Noto_Sans',sans-serif]">
                    <p className="w-[112px] border-r border-[#77777f] bg-linear-to-b from-[#4a4c55] via-[#26282c] to-[#383a40]">Online</p>
                    <p className="flex-1 border-r border-[#222] bg-linear-to-b from-[#4a4c55] via-[#26282c] to-[#383a40]">
                        33.657689, -112.238847, 2:11 PM, 21mph, 1188 feet, 329 bearing
                    </p>
                    <div className="w-[131px]" />
                </footer>
            </div>

            {/* callouts drawn over the window */}
            <div className={`absolute inset-0 pointer-events-none text-[#ff0000] text-[16px] leading-[18px] ${ARIAL}`}>
                <svg className="absolute inset-0 w-full h-full" stroke="#ff0000">
                    <path d="M681 91L773 138" strokeWidth="4" />
                    <path d="M520 213L892 179" strokeWidth="4" />
                </svg>
                <p className="absolute left-[548px] top-[44px] whitespace-nowrap">
                    Indicates software is downloading information
                    <br />
                    from NVC servers in the background
                </p>
                <p className="absolute left-[383px] top-[216px] whitespace-nowrap">GPS tracking is on</p>
            </div>
        </div>
    )
}
